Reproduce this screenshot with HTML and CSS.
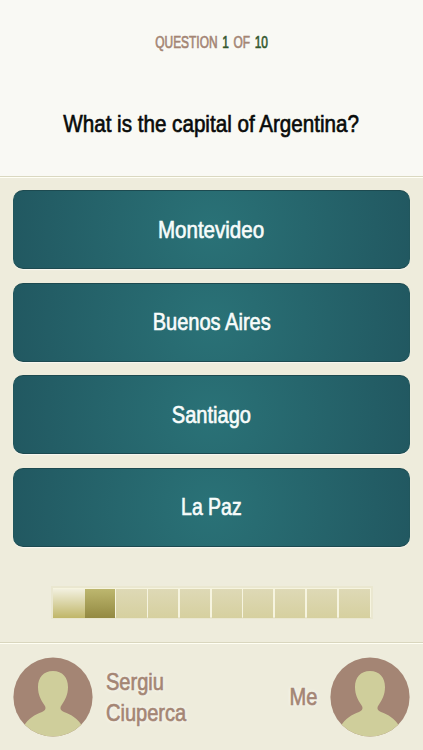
FILE: index.html
```html
<!DOCTYPE html>
<html lang="en">
<head>
<meta charset="utf-8">
<title>Quiz</title>
<link rel="stylesheet" href="styles.css">
</head>
<body>
<main class="quiz">
  <header class="question">
    <p class="counter"><span class="condensed">QUESTION <b>1</b> OF <b>10</b></span></p>
    <h1 class="prompt"><span class="condensed">What is the capital of Argentina?</span></h1>
  </header>
  <section class="answers">
    <button class="answer"><span class="condensed wide">Montevideo</span></button>
    <button class="answer"><span class="condensed">Buenos Aires</span></button>
    <button class="answer"><span class="condensed">Santiago</span></button>
    <button class="answer"><span class="condensed tight">La Paz</span></button>
  </section>
  <div class="progress">
    <i class="cell current"></i><i class="cell done"></i><i class="cell"></i><i class="cell"></i><i class="cell"></i><i class="cell"></i><i class="cell"></i><i class="cell"></i><i class="cell"></i><i class="cell last"></i>
  </div>
  <footer class="players">
    <svg class="avatar" viewBox="0 0 80 80"><defs><clipPath id="disc"><circle cx="40" cy="40" r="39.6"/></clipPath></defs><circle cx="40" cy="40" r="39.6" fill="#a48574"/><path id="person" clip-path="url(#disc)" fill="#cfce9b" d="M40 14C30.500 14 25 20.500 25 30C25 38 28 43 31 47.500C33.500 51 33 53 29 55C22 57.500 15 61.500 11 69V80H69V69C65 61.500 58 57.500 51 55C47 53 46.500 51 49 47.500C52 43 55 38 55 30C55 20.500 49.500 14 40 14Z"/></svg>
    <p class="name"><span class="condensed">Sergiu<br>Ciuperca</span></p>
    <p class="name mine"><span class="condensed">Me</span></p>
    <svg class="avatar" viewBox="0 0 80 80"><circle cx="40" cy="40" r="39.6" fill="#a48574"/><use href="#person"/></svg>
  </footer>
</main>
</body>
</html>
```
FILE: styles.css
```css
* { box-sizing: border-box; }
body { margin: 0; font-family: "Liberation Sans", Arial, sans-serif; background: #eeecdc; }
p, h1 { margin: 0; font-weight: 400; }
.quiz { width: 423px; height: 750px; display: flex; flex-direction: column; overflow: hidden; }
.condensed { display: inline-block; white-space: nowrap; transform: scaleX(.835); -webkit-text-stroke: .65px currentColor; }
.question { height: 178px; flex: none; text-align: center; background: #f9f9f4; border-bottom: 1px solid #fffff5; box-shadow: inset 0 -1px #dad8c0; }
.counter { padding-top: 33px; font-size: 16px; line-height: 20px; color: #a48574; }
.counter .condensed { transform: scaleX(.745); word-spacing: 1.8px; }
.counter b { font-weight: 400; color: #35582f; }
.prompt { margin-top: 55px; font-size: 24px; line-height: 32px; color: #080a09; }
.prompt .condensed { transform: scaleX(.859); }
.answers { padding: 12px 13px 0; display: flex; flex-direction: column; gap: 13.5px; }
.answer { height: 79px; padding: 0; border: 1px solid #1d4a50; border-left-color: #21575d; border-right-color: #21575d; border-radius: 10px; background: radial-gradient(circle 210px at center, #2a7277, #215760); box-shadow: 0 1px 1px #fff9; color: #f8fcfb; font: 24px "Liberation Sans", Arial, sans-serif; }
.answer .wide { transform: scaleX(.856); }
.answer .tight { transform: scaleX(.81); }
.progress { width: 322px; height: 33px; margin: 39.5px 0 0 50.5px; padding: 2.500px 2.500px 1px; display: flex; gap: 1.700px; flex: none; background: #f6f4df; box-shadow: inset 0 0 0 2px #eae7d0; }
.cell { flex: 1; background: linear-gradient(#ded9b6, #d6d09f); }
.current { margin-right: -1.700px; flex: 1 0 1.700px; background: linear-gradient(#f2f0df, #c0b668); }
.last { flex: 1 0 1.400px; }
.done { background: linear-gradient(#bdb76f, #938941); }
.players { margin-top: auto; height: 108px; padding: 14px 13px 0; display: flex; align-items: flex-start; border-top: 1px solid #d9d6be; box-shadow: inset 0 1px #fffff4; }
.avatar { width: 80px; height: 80px; flex: none; }
.name { padding: 10px 0 0 13px; font-size: 24px; line-height: 30.5px; color: #a48574; text-shadow: 0 0 5px #fff; }
.name .condensed { transform-origin: left; }
.mine { margin-left: auto; padding: 25px 13px 0 0; }
.mine .condensed { transform-origin: right; }
```
